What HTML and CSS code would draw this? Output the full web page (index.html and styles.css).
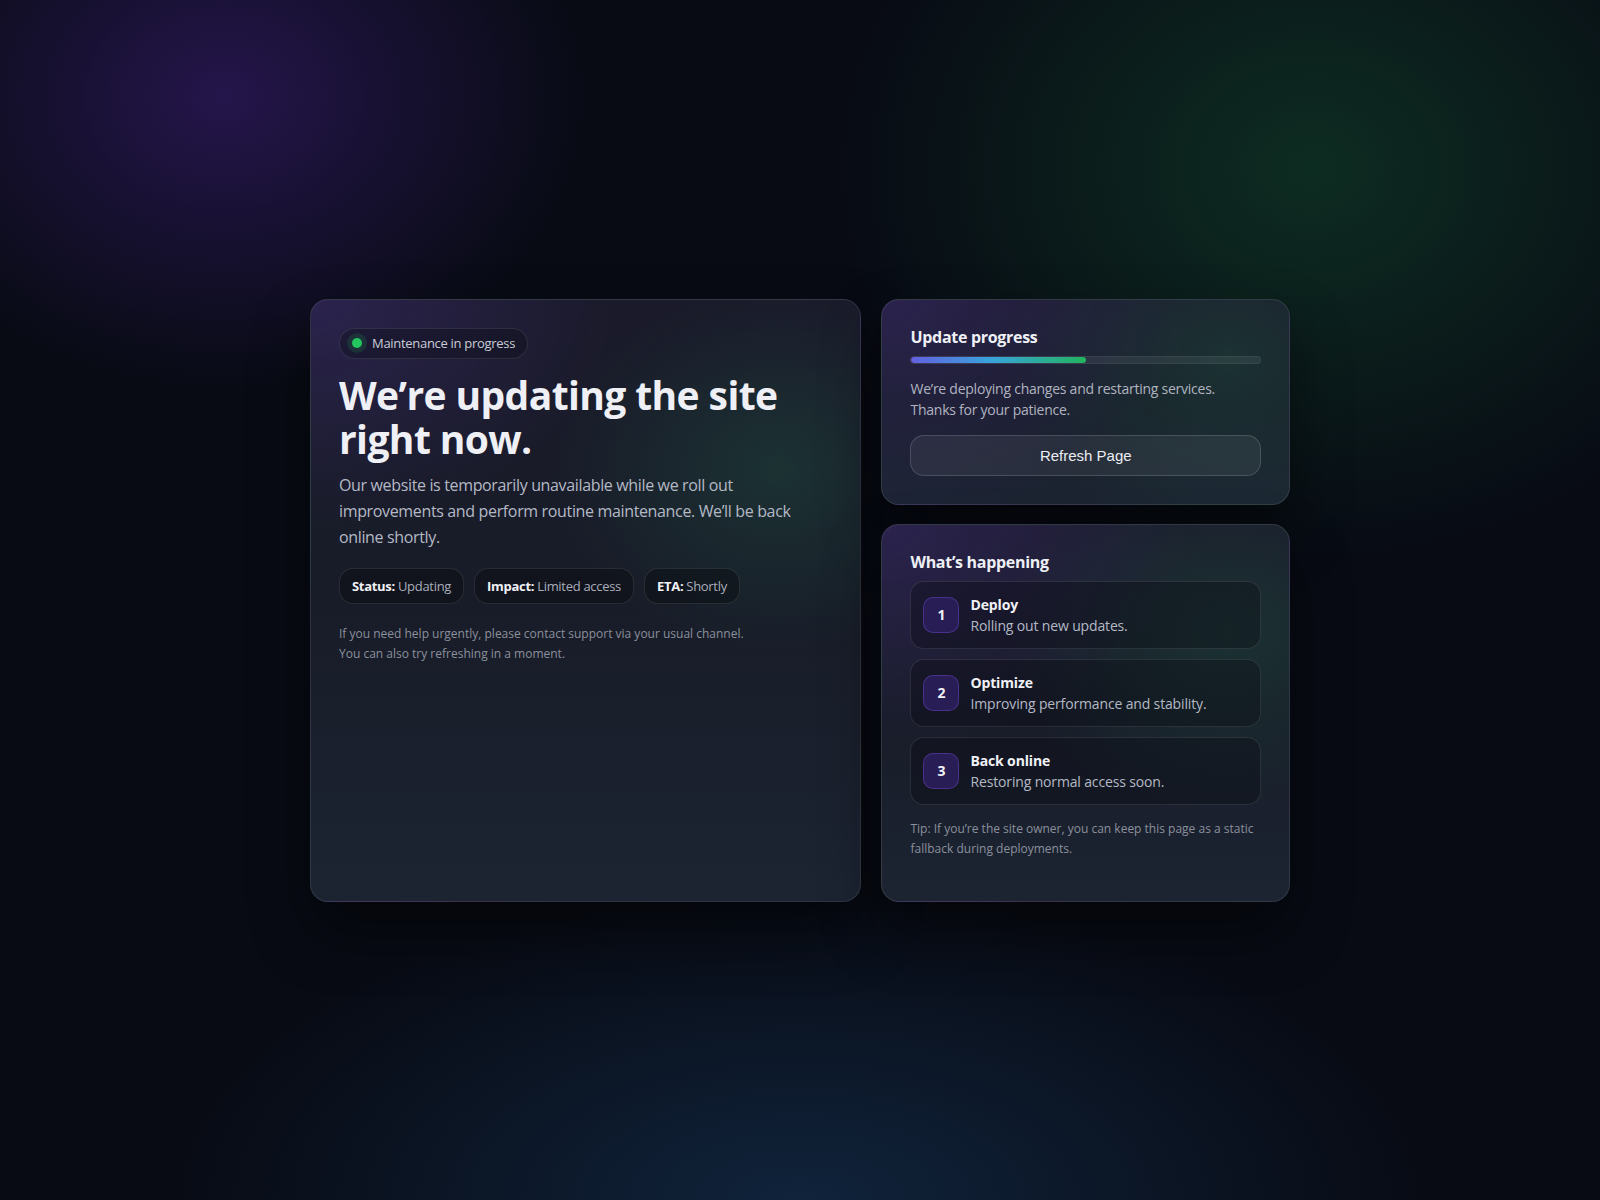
FILE: index.html
```html
<!DOCTYPE html>
<html lang="en">
<head>
  <meta charset="UTF-8" />
  <meta name="viewport" content="width=device-width, initial-scale=1" />
  <title>Maintenance</title>
  <link rel="stylesheet" href="styles.css">
</head>
<body>
  <main class="layout">
    <section class="card card-main">
      <span class="badge"><span class="dot"></span>Maintenance in progress</span>
      <h1>We’re updating the site right now.</h1>
      <p class="lead">Our website is temporarily unavailable while we roll out improvements and perform routine maintenance. We’ll be back online shortly.</p>

      <ul class="chips">
        <li><b>Status:</b> Updating</li>
        <li><b>Impact:</b> Limited access</li>
        <li><b>ETA:</b> Shortly</li>
      </ul>

      <p class="note">If you need help urgently, please contact support via your usual channel.<br>You can also try refreshing in a moment.</p>
    </section>

    <aside class="side">
      <section class="card">
        <h2>Update progress</h2>
        <div class="bar"><span class="bar-fill" style="width: 50%"></span></div>
        <p class="muted">We’re deploying changes and restarting services.<br>Thanks for your patience.</p>
        <button class="btn" id="refreshBtn">Refresh Page</button>
      </section>

      <section class="card card-steps">
        <h2>What’s happening</h2>
        <ol class="steps">
          <li>
            <span class="num">1</span>
            <div><strong>Deploy</strong><span>Rolling out new updates.</span></div>
          </li>
          <li>
            <span class="num">2</span>
            <div><strong>Optimize</strong><span>Improving performance and stability.</span></div>
          </li>
          <li>
            <span class="num">3</span>
            <div><strong>Back online</strong><span>Restoring normal access soon.</span></div>
          </li>
        </ol>
        <p class="tip">Tip: If you’re the site owner, you can keep this page as a static fallback during deployments.</p>
      </section>
    </aside>
  </main>

  <script>
    document.getElementById('refreshBtn').addEventListener('click', () => {
      location.reload();
    });
  </script>
</body>
</html>
```

FILE: styles.css
```css
* {
  box-sizing: border-box;
}

body {
  margin: 0;
  min-height: 100vh;
  display: grid;
  place-items: center;
  font-family: "Open Sans", "Noto Sans", sans-serif;
  color: #eceef3;
  background-color: #080b14;
  background-image:
    radial-gradient(520px 420px at 14% 8%, rgba(60, 30, 120, 0.55), transparent 70%),
    radial-gradient(680px 560px at 82% 14%, rgba(20, 85, 50, 0.45), transparent 70%),
    radial-gradient(900px 440px at 50% 100%, rgba(20, 48, 80, 0.65), transparent 70%);
}

.layout {
  width: 980px;
  display: grid;
  grid-template-columns: 1.35fr 1fr;
  gap: 20px;
}

.card {
  border: 1px solid rgba(255, 255, 255, 0.1);
  border-radius: 18px;
  padding: 28px;
  background:
    radial-gradient(440px 320px at 0% 0%, rgba(110, 70, 220, 0.2), transparent 70%),
    radial-gradient(320px 260px at 85% 28%, rgba(40, 160, 100, 0.17), transparent 70%),
    linear-gradient(180deg, #1a1a2a 0%, #181c28 50%, #1c2432 100%);
  box-shadow: 0 30px 60px rgba(0, 0, 0, 0.45);
}

.card-main {
  min-height: 603px;
}

/* status pill at the top */
.badge {
  display: inline-flex;
  align-items: center;
  gap: 10px;
  height: 31px;
  padding: 0 12px;
  border: 1px solid rgba(255, 255, 255, 0.1);
  border-radius: 999px;
  background: rgba(10, 12, 20, 0.35);
  font-size: 13px;
  letter-spacing: -0.3px;
  color: #c9ccd6;
}

.dot {
  width: 10px;
  height: 10px;
  border-radius: 50%;
  background: #22c55e;
  box-shadow: 0 0 0 5px rgba(34, 197, 94, 0.14);
}

h1 {
  margin: 14px 0 11px;
  font-size: 39px;
  line-height: 44px;
  font-weight: 700;
  letter-spacing: -0.6px;
  color: #eef0f5;
}

.lead {
  margin: 0;
  font-size: 16px;
  line-height: 26px;
  letter-spacing: -0.35px;
  color: #b4b9c6;
}

.chips {
  list-style: none;
  margin: 18px 0 0;
  padding: 0;
  display: flex;
  gap: 10px;
}

.chips li {
  height: 36px;
  display: flex;
  align-items: center;
  padding: 0 12px;
  border: 1px solid rgba(255, 255, 255, 0.1);
  border-radius: 14px;
  background: rgba(8, 10, 16, 0.45);
  font-size: 13px;
  letter-spacing: -0.3px;
  color: #a9aebb;
}

.chips b {
  color: #f0f1f5;
  margin-right: 3px;
}

.note {
  margin: 20px 0 0;
  font-size: 12px;
  line-height: 20px;
  color: #8b909d;
}

/* right column */
.side {
  display: flex;
  flex-direction: column;
  gap: 19px;
}

.card-steps {
  flex: 1;
}

h2 {
  margin: 0;
  font-size: 16px;
  line-height: 18px;
  font-weight: 700;
  letter-spacing: -0.3px;
  color: #eef0f5;
}

.bar {
  margin-top: 10px;
  height: 8px;
  border-radius: 999px;
  background: rgba(255, 255, 255, 0.07);
  border: 1px solid rgba(255, 255, 255, 0.06);
  overflow: hidden;
}

.bar-fill {
  display: block;
  height: 100%;
  border-radius: 999px;
  background: linear-gradient(90deg, #6360e0, #38a3dc 45%, #22b35e);
}

.muted {
  margin: 14px 0 0;
  font-size: 14px;
  line-height: 21px;
  letter-spacing: -0.25px;
  color: #b0b4c0;
}

.btn {
  display: block;
  width: 100%;
  height: 41px;
  margin-top: 15px;
  border: 1px solid rgba(255, 255, 255, 0.15);
  border-radius: 14px;
  background: rgba(255, 255, 255, 0.06);
  color: #eceef3;
  font-family: "Liberation Sans", Arial, sans-serif;
  font-size: 15px;
  cursor: pointer;
}

.btn:hover {
  background: rgba(255, 255, 255, 0.1);
}

.steps {
  list-style: none;
  margin: 10px 0 0;
  padding: 0;
  display: flex;
  flex-direction: column;
  gap: 10px;
}

.steps li {
  display: flex;
  align-items: center;
  gap: 11px;
  padding: 12px;
  border: 1px solid rgba(255, 255, 255, 0.1);
  border-radius: 14px;
  background: rgba(8, 10, 16, 0.35);
}

.num {
  flex: none;
  width: 36px;
  height: 36px;
  display: grid;
  place-items: center;
  border-radius: 10px;
  border: 1px solid rgba(130, 90, 240, 0.35);
  background: #281d55;
  font-size: 14px;
  font-weight: 700;
  color: #f0f1f5;
}

.steps strong {
  display: block;
  font-size: 14px;
  line-height: 21px;
  letter-spacing: -0.15px;
  color: #f0f1f5;
}

.steps span:not(.num) {
  display: block;
  font-size: 14px;
  line-height: 21px;
  letter-spacing: -0.15px;
  color: #b4b9c6;
}

.tip {
  margin: 14px 0 0;
  font-size: 12px;
  line-height: 20px;
  color: #8b909d;
}
```
